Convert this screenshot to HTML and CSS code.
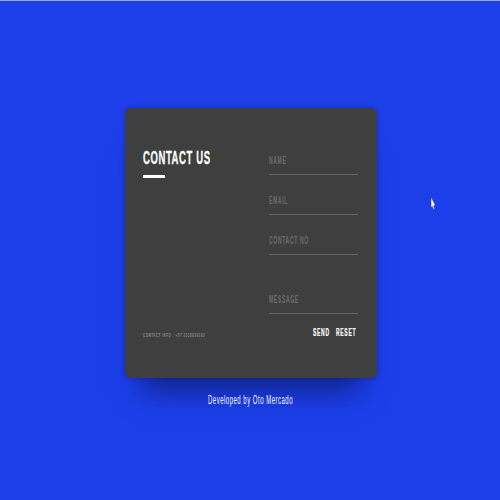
FILE: index.html
```html
<!DOCTYPE html>
<html lang="en">
<head>
<meta charset="utf-8">
<title>Contact Us</title>
<link rel="stylesheet" href="styles.css">
</head>
<body>
<main class="card">
  <section class="intro">
    <h1 class="title"><span class="condensed">CONTACT US</span></h1>
    <p class="info"><span class="condensed">CONTACT INFO : +57 3118039192</span></p>
  </section>
  <form class="form">
    <div class="field"><span class="condensed">NAME</span></div>
    <div class="field"><span class="condensed">EMAIL</span></div>
    <div class="field"><span class="condensed">CONTACT NO</span></div>
    <div class="field field-message"><span class="condensed">MESSAGE</span></div>
    <div class="actions">
      <button type="button" class="send"><span class="condensed">SEND</span></button>
      <button type="button" class="reset"><span class="condensed">RESET</span></button>
    </div>
  </form>
</main>
<footer class="credit"><span class="condensed">Developed by Oto Mercado</span></footer>
<svg class="cursor" width="6" height="15" viewBox="0 0 6 15"><path d="M1 1V11.5L2.2 10.2L3.4 13.5L4.5 13L3.7 9.6H5.5Z" fill="#fff" stroke="#19236b" stroke-width=".4"/></svg>
</body>
</html>
```

FILE: styles.css
```css
* {
  box-sizing: border-box;
}

body {
  margin: 0;
  height: 500px;
  overflow: hidden;
  padding-top: 107px;
  border-top: 1px solid #91a5f3;
  background: #1c3fea;
  font-family: "Liberation Sans", Arial, sans-serif;
  color: #fff;
}

.condensed {
  display: inline-block;
  white-space: nowrap;
  transform: scaleX(.5);
  transform-origin: left center;
}

.card {
  display: flex;
  width: 252px;
  height: 270px;
  margin-left: 125px;
  padding: 40px 19px 0 18px;
  border-radius: 6px;
  background: #3f3f3f;
  box-shadow: 0 30px 26px -16px rgba(10, 20, 80, .6), 0 0 5px rgba(10, 20, 90, .35);
}

.intro {
  width: 126px;
}

.title {
  width: 68px;
  height: 20px;
  margin: 0;
  font-size: 19px;
  line-height: 19px;
}

.title .condensed {
  letter-spacing: 1.2px;
  -webkit-text-stroke: .3px #fff;
}

.title::after {
  content: "";
  display: block;
  width: 22px;
  height: 3px;
  margin-top: 8px;
  background: #fff;
}

.info {
  width: 63px;
  margin: 163px 0 0;
  font-size: 6px;
  font-weight: bold;
  line-height: 9px;
  color: #8e8e8e;
}

.info .condensed {
  letter-spacing: 1px;
}

.form {
  width: 89px;
  font-size: 10px;
  font-weight: bold;
  letter-spacing: 1.4px;
}

.field {
  width: 89px;
  height: 27px;
  margin-bottom: 13px;
  padding-top: 6px;
  border-bottom: 1px solid #646464;
  line-height: 13px;
  color: #6c6c6c;
}

.field-message {
  margin: 32px 0 0;
}

.actions {
  display: flex;
  margin: 12px 0 0 44px;
}

.actions button {
  width: 23px;
  padding: 0;
  border: 0;
  background: none;
  font: inherit;
  line-height: 13px;
  letter-spacing: inherit;
  text-align: left;
  color: #fff;
  -webkit-text-stroke: .2px #fff;
}

.credit {
  width: 86px;
  margin: 14px 0 0 208px;
  font-size: 12px;
  line-height: 16px;
  color: #f2f4ff;
}

.credit .condensed {
  transform: scaleX(.5);
  letter-spacing: 1px;
}

.cursor {
  position: absolute;
  left: 430px;
  top: 196px;
}
```
